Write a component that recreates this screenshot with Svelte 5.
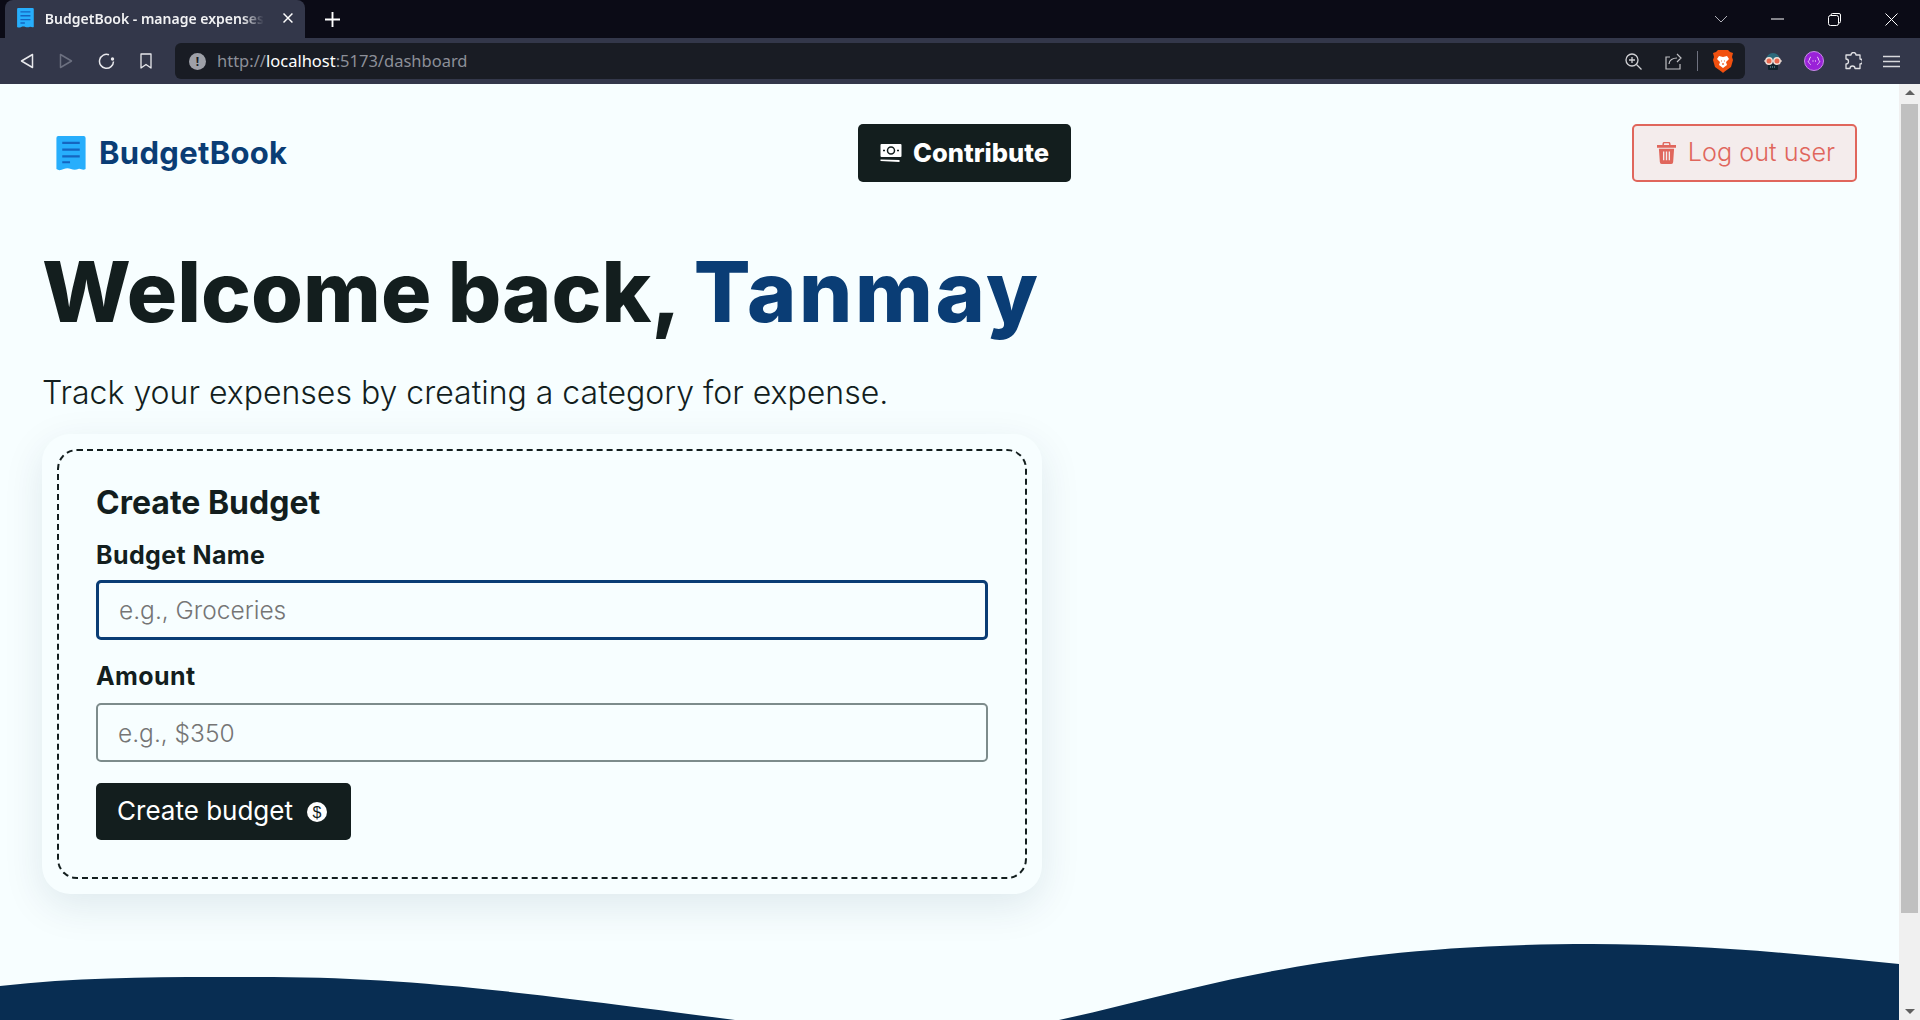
<script>
    let name = $state('');
    let amount = $state('');
</script>

<div class="window">
    <div class="tabstrip">
        <div class="tab">
            <svg class="favicon" viewBox="0 0 30 36" width="17" height="20">
                <path d="M2 0h26a2 2 0 0 1 2 2v32c-3 2-5-1-7.500 0s-5 1-7.500 0-5-1-7.500 0-5 2-7.500 0V2a2 2 0 0 1 2-2z" fill="#27aefc" />
                <path d="M6 7h18M6 14h18M6 21h18M6 27h8" stroke="#1565c0" stroke-width="2.500" />
            </svg>
            <span class="tab-title">BudgetBook - manage expenses</span>
            <svg class="tab-close" viewBox="0 0 10 10" width="10" height="10"><path d="M0.500 0.500l9 9M9.500 0.500l-9 9" stroke="#fff" stroke-width="1.500" /></svg>
        </div>
        <svg class="new-tab" viewBox="0 0 16 16" width="15" height="15"><path d="M8 0v16M0 8h16" stroke="#fff" stroke-width="2" /></svg>
        <div class="window-controls">
            <svg viewBox="0 0 14 8" width="14" height="8"><path d="M1 1l6 6 6-6" fill="none" stroke="#b0b0b8" /></svg>
            <svg viewBox="0 0 13 2" width="13" height="2"><path d="M0 1h13" stroke="#fff" /></svg>
            <svg viewBox="0 0 13 13" width="13" height="13"><path d="M3 2.500V2a1.500 1.500 0 0 1 1.500-1.500H11A1.500 1.500 0 0 1 12.500 2v6.500A1.500 1.500 0 0 1 11 10" fill="none" stroke="#fff" /><rect x="0.500" y="2.500" width="10" height="10" rx="2" fill="none" stroke="#fff" /></svg>
            <svg viewBox="0 0 13 13" width="13" height="13"><path d="M0.500 0.500l12 12M12.500 0.500l-12 12" stroke="#fff" /></svg>
        </div>
    </div>

    <div class="toolbar">
        <div class="nav-icons">
            <svg viewBox="0 0 14 16" width="14" height="16"><path d="M12.500 1.500v13L1.500 8z" fill="none" stroke="#e8e8ec" stroke-width="1.500" stroke-linejoin="round" /></svg>
            <svg viewBox="0 0 14 16" width="14" height="16"><path d="M1.500 1.500v13L12.500 8z" fill="none" stroke="#6c7080" stroke-width="1.500" stroke-linejoin="round" /></svg>
            <svg viewBox="0 0 17 17" width="17" height="17"><path d="M11 1.800A7 7 0 1 0 15.500 8.500" fill="none" stroke="#e8e8ec" stroke-width="1.500" /><circle cx="14.500" cy="6" r="1.700" fill="#e8e8ec" /></svg>
            <svg viewBox="0 0 12 16" width="12" height="16"><path d="M1 1h10v14l-5-3.500L1 15z" fill="none" stroke="#e8e8ec" stroke-width="1.300" stroke-linejoin="round" /></svg>
        </div>
        <div class="urlbar">
            <span class="info">!</span>
            <span class="url">http://<b>localhost</b>:5173/dashboard</span>
            <div class="url-icons">
                <svg viewBox="0 0 17 17" width="17" height="17"><circle cx="7" cy="7" r="6" fill="none" stroke="#d0d0d4" stroke-width="1.300" /><path d="M4 7h6M7 4v6M11.500 11.500l5 5" stroke="#d0d0d4" stroke-width="1.300" /></svg>
                <svg viewBox="0 0 17 17" width="17" height="17"><path d="M5 4H1v12h14v-5M4 11c0-4 4-6 8-6M12 1l4 4-4 4" fill="none" stroke="#c0c0c4" stroke-width="1.200" /></svg>
                <span class="divider"></span>
                <svg viewBox="0 0 20 23" width="20" height="23">
                    <path d="M5 0h10l2 2 3 1-1 4 1 3-2 7-7 5-1 1-1-1-7-5-2-7 1-3-1-4 3-1z" fill="#f1500f" />
                    <path d="M6 6l4 1 4-1 2 3-3 3 1 3-4 3-4-3 1-3-3-3z" fill="#fff" />
                    <path d="M8 11h.8M11.200 11h.8M10 13v2" stroke="#f1500f" stroke-width="1.200" />
                </svg>
            </div>
        </div>
        <div class="ext-icons">
            <svg viewBox="0 0 20 20" width="20" height="20">
                <path d="M3 9a7 7 0 0 1 14 0z" fill="#2d6a7c" />
                <rect x="5" y="13" width="10" height="6" rx="1" fill="#10222c" />
                <path d="M7 16h6" stroke="#7fb2c0" stroke-dasharray="1 1" />
                <path d="M1 10h18" stroke="#e0d0c8" stroke-width="1.200" />
                <circle cx="6" cy="10" r="3.200" fill="#e8674f" stroke="#f0e0d8" stroke-width="1.400" />
                <circle cx="14" cy="10" r="3.200" fill="#e8674f" stroke="#f0e0d8" stroke-width="1.400" />
            </svg>
            <svg viewBox="0 0 20 20" width="20" height="20">
                <circle cx="10" cy="10" r="9.500" fill="#9a22d8" stroke="#c88be8" />
                <path d="M7 6c-2 0-1 4-2.500 4S7 14 7 14M13 6c2 0 1 4 2.500 4S13 14 13 14" fill="none" stroke="#e6c8f6" />
                <path d="M8.500 10h1M11 10h1" stroke="#fff" />
            </svg>
            <svg viewBox="0 0 18 18" width="18" height="18"><path d="M7 3a2.500 2.500 0 0 1 5 0h4v4a2.500 2.500 0 0 1 0 5v4.500H11a2.500 2.500 0 0 0-5 0H2V12a2.500 2.500 0 0 0 0-5V3z" fill="none" stroke="#e0e0e4" stroke-width="1.300" stroke-linejoin="round" /></svg>
            <svg viewBox="0 0 17 13" width="17" height="13"><path d="M0 1.500h17M0 6.500h17M0 11.500h17" stroke="#d8d8dc" stroke-width="1.500" /></svg>
        </div>
    </div>

    <div class="viewport">
        <main class="page">
            <nav>
                <a class="brand" href="/">
                    <svg viewBox="0 0 30 36" width="30" height="35">
                        <path d="M2 0h26a2 2 0 0 1 2 2v32c-3 2-5-1-7.500 0s-5 1-7.500 0-5-1-7.500 0-5 2-7.500 0V2a2 2 0 0 1 2-2z" fill="#27aefc" />
                        <path d="M6 7h18M6 14h18M6 21h18M6 27h8" stroke="#1565c0" stroke-width="2.200" />
                    </svg>
                    <span>BudgetBook</span>
                </a>
                <button class="btn contribute">
                    <svg viewBox="0 0 22 20" width="22" height="20">
                        <path d="M1.500 1h19a1 1 0 0 1 1 1v11a1 1 0 0 1-1 1h-19a1 1 0 0 1-1-1V2a1 1 0 0 1 1-1z" fill="#fff" />
                        <circle cx="11" cy="7.500" r="3.500" fill="none" stroke="#131e1e" stroke-width="1.500" />
                        <path d="M3 7.500h2M17 7.500h2" stroke="#131e1e" stroke-width="1.500" />
                        <path d="M0.500 16.500l19 0.500v2L0.500 18z" fill="#fff" />
                    </svg>
                    <span>Contribute</span>
                </button>
                <button class="logout">
                    <svg viewBox="0 0 20 23" width="19" height="22">
                        <path d="M6.500 3V2a1.500 1.500 0 0 1 1.500-1.500h4A1.500 1.500 0 0 1 13.500 2v1" fill="none" stroke="#e0665c" stroke-width="1.500" />
                        <path d="M0 3h20v3H0zM2 7h16l-1 14a2 2 0 0 1-2 2H5a2 2 0 0 1-2-2z" fill="#e0665c" />
                        <path d="M7 10v9M13 10v9M10 10v9" stroke="#f4ecec" stroke-width="1.400" />
                    </svg>
                    <span>Log out user</span>
                </button>
            </nav>

            <section class="content">
                <h1>Welcome back, <span>Tanmay</span></h1>
                <p>Track your expenses by creating a category for expense.</p>

                <div class="card">
                    <form class="inner" onsubmit={(e) => e.preventDefault()}>
                        <h2>Create Budget</h2>
                        <div class="field">
                            <label for="budget-name">Budget Name</label>
                            <input id="budget-name" class="focused" type="text" placeholder="e.g., Groceries" bind:value={name} />
                        </div>
                        <div class="field amount">
                            <label for="budget-amount">Amount</label>
                            <input id="budget-amount" type="text" placeholder="e.g., $350" bind:value={amount} />
                        </div>
                        <button class="btn create" type="submit">
                            <span>Create budget</span>
                            <svg viewBox="0 0 20 20" width="20" height="20">
                                <circle cx="10" cy="10" r="10" fill="#fff" />
                                <text x="10" y="15.500" text-anchor="middle" class="dollar">$</text>
                            </svg>
                        </button>
                    </form>
                </div>
            </section>

            <svg class="wave" viewBox="0 0 1899 76" preserveAspectRatio="none" height="76">
                <path d="M0 42C90 32 170 33 257 33C400 33 500 45 735 76H1059C1200 45 1320 0 1592 0C1700 0 1800 10 1899 20V76H0z" fill="#082d52" />
            </svg>
        </main>

        <div class="scrollbar">
            <span class="arrow up"></span>
            <div class="thumb"></div>
            <span class="arrow down"></span>
        </div>
    </div>
</div>

<style>
    :global(body) {
        overflow: hidden;
    }

    .window {
        width: 1920px;
        height: 1020px;
        display: flex;
        flex-direction: column;
        font-family: Inter, 'Noto Sans', sans-serif;
        background-color: #f7feff;
    }

    .tabstrip {
        height: 38px;
        flex: none;
        display: flex;
        align-items: center;
        background-color: #0b0b16;
        padding-left: 5px;
    }

    .tab {
        width: 300px;
        height: 38px;
        display: flex;
        align-items: center;
        padding: 0 12px 2px;
        box-sizing: border-box;
        background-color: #33374a;
        border-radius: 8px 8px 0 0;
    }

    .tab-title {
        margin-left: 11px;
        width: 221px;
        overflow: hidden;
        white-space: nowrap;
        font: 600 14px 'Noto Sans', sans-serif;
        color: #f2f2f4;
        mask-image: linear-gradient(to right, #000 90%, transparent);
    }

    .tab-close {
        margin-left: 19px;
    }

    .new-tab {
        margin-left: 20px;
    }

    .window-controls {
        margin-left: auto;
        display: flex;
        align-items: center;
        gap: 44px;
        padding-right: 22px;
    }

    .window-controls svg:nth-child(1) {
        margin-right: -1px;
    }

    .toolbar {
        height: 46px;
        flex: none;
        display: flex;
        align-items: center;
        background-color: #33374a;
    }

    .nav-icons {
        width: 175px;
        display: flex;
        align-items: center;
        gap: 25px;
        padding-left: 20px;
        box-sizing: border-box;
    }

    .urlbar {
        width: 1570px;
        height: 36px;
        display: flex;
        align-items: center;
        padding: 0 12px 0 14px;
        box-sizing: border-box;
        background-color: #191c24;
        border-radius: 6px;
    }

    .info {
        width: 17px;
        height: 17px;
        display: flex;
        align-items: center;
        justify-content: center;
        border-radius: 50%;
        background-color: #9ea0a8;
        color: #191c24;
        font: 700 12px 'Noto Sans', sans-serif;
    }

    .url {
        margin: -2px 0 0 11px;
        font: 400 16.500px 'Noto Sans', sans-serif;
        color: #8c8f98;
    }

    .url b {
        font-weight: 400;
        color: #fff;
    }

    .url-icons {
        margin-left: auto;
        display: flex;
        align-items: center;
        gap: 16px;
    }

    .url-icons svg:nth-child(1) {
        margin-right: 7px;
    }

    .divider {
        width: 1px;
        height: 20px;
        margin: 0 -1px;
        background-color: #6f7280;
    }

    .ext-icons {
        flex: 1;
        display: flex;
        align-items: center;
        justify-content: space-between;
        padding: 0 20px 0 18px;
    }

    .viewport {
        flex: 1;
        min-height: 0;
        display: flex;
    }

    .page {
        flex: 1;
        min-width: 0;
        display: flex;
        flex-direction: column;
        overflow: hidden;
        color: #131e1e;
    }

    nav {
        display: grid;
        grid-template-columns: 802px 213px 1fr;
        align-items: center;
        padding: 40px 42px 0 56px;
    }

    .brand {
        display: flex;
        align-items: center;
        gap: 13px;
        text-decoration: none;
        color: #0a3d75;
        font-weight: 700;
        font-size: 31px;
        letter-spacing: 0.3px;
    }

    .brand span,
    .btn span,
    .logout span {
        margin-top: -2px;
    }

    .btn {
        display: flex;
        align-items: center;
        justify-content: center;
        border: none;
        border-radius: 5px;
        background-color: #131e1e;
        color: #fff;
        font-family: inherit;
    }

    .contribute {
        width: 213px;
        height: 58px;
        gap: 11px;
        padding-left: 6px;
        font-size: 25.500px;
        font-weight: 800;
    }

    .logout {
        justify-self: end;
        width: 225px;
        height: 58px;
        display: flex;
        align-items: center;
        justify-content: center;
        gap: 12px;
        padding-left: 9px;
        border: 2px solid #e0665c;
        border-radius: 5px;
        background-color: #f4ecec;
        color: #e0665c;
        font-family: inherit;
        font-size: 25.200px;
        font-weight: 300;
    }

    .content {
        padding: 0 42px;
    }

    h1 {
        margin: 55px 0 0;
        font-size: 84px;
        line-height: 110px;
        font-weight: 800;
        word-spacing: -2px;
        white-space: nowrap;
    }

    h1 span {
        color: #0a3d75;
        letter-spacing: 2.600px;
    }

    p {
        margin: 26px 0 0;
        font-size: 32px;
        line-height: 40px;
        font-weight: 300;
    }

    .card {
        width: 1000px;
        margin-top: 21px;
        padding: 15px;
        box-sizing: border-box;
        border-radius: 28px;
        background-color: #f7feff;
        box-shadow: 0 12px 40px rgba(8, 45, 82, 0.1);
    }

    .inner {
        height: 430px;
        display: flex;
        flex-direction: column;
        align-items: flex-start;
        padding: 32px 37px;
        box-sizing: border-box;
        border: 2px dashed #131e1e;
        border-radius: 20px;
    }

    h2 {
        margin: 0 0 16px;
        font-size: 32px;
        line-height: 40px;
        font-weight: 700;
    }

    .field {
        width: 100%;
        margin-bottom: 20px;
        display: flex;
        flex-direction: column;
        gap: 9px;
    }

    .amount {
        gap: 11px;
        margin-bottom: 21px;
    }

    label {
        font-size: 25px;
        line-height: 32px;
        font-weight: 700;
        letter-spacing: 0.4px;
    }

    input {
        width: 100%;
        height: 59px;
        padding: 0 20px;
        box-sizing: border-box;
        border: 2px solid #7d8c8c;
        border-radius: 5px;
        background-color: #f7feff;
        color: #131e1e;
        font-family: inherit;
        font-size: 24.500px;
        font-weight: 300;
        outline: none;
    }

    input::placeholder {
        color: #757575;
    }

    .focused {
        height: 60px;
        border: 3px solid #0a3d75;
    }

    .create {
        width: 255px;
        height: 57px;
        gap: 14px;
        padding-right: 9px;
        font-size: 26px;
        font-weight: 400;
    }

    .dollar {
        font: 400 16px 'Liberation Sans', sans-serif;
        fill: #131e1e;
    }

    .wave {
        width: 100%;
        flex: none;
        margin-top: auto;
        display: block;
    }

    .scrollbar {
        width: 21px;
        flex: none;
        display: flex;
        flex-direction: column;
        align-items: center;
        background-color: #f0f0f0;
    }

    .arrow {
        width: 0;
        height: 0;
        margin: 6px 0;
        border-left: 5px solid transparent;
        border-right: 5px solid transparent;
    }

    .up {
        border-bottom: 5px solid #606060;
    }

    .down {
        border-top: 5px solid #606060;
        margin-top: auto;
    }

    .thumb {
        width: 17px;
        height: 809px;
        margin-top: 3px;
        background-color: #c0c0c0;
    }
</style>
